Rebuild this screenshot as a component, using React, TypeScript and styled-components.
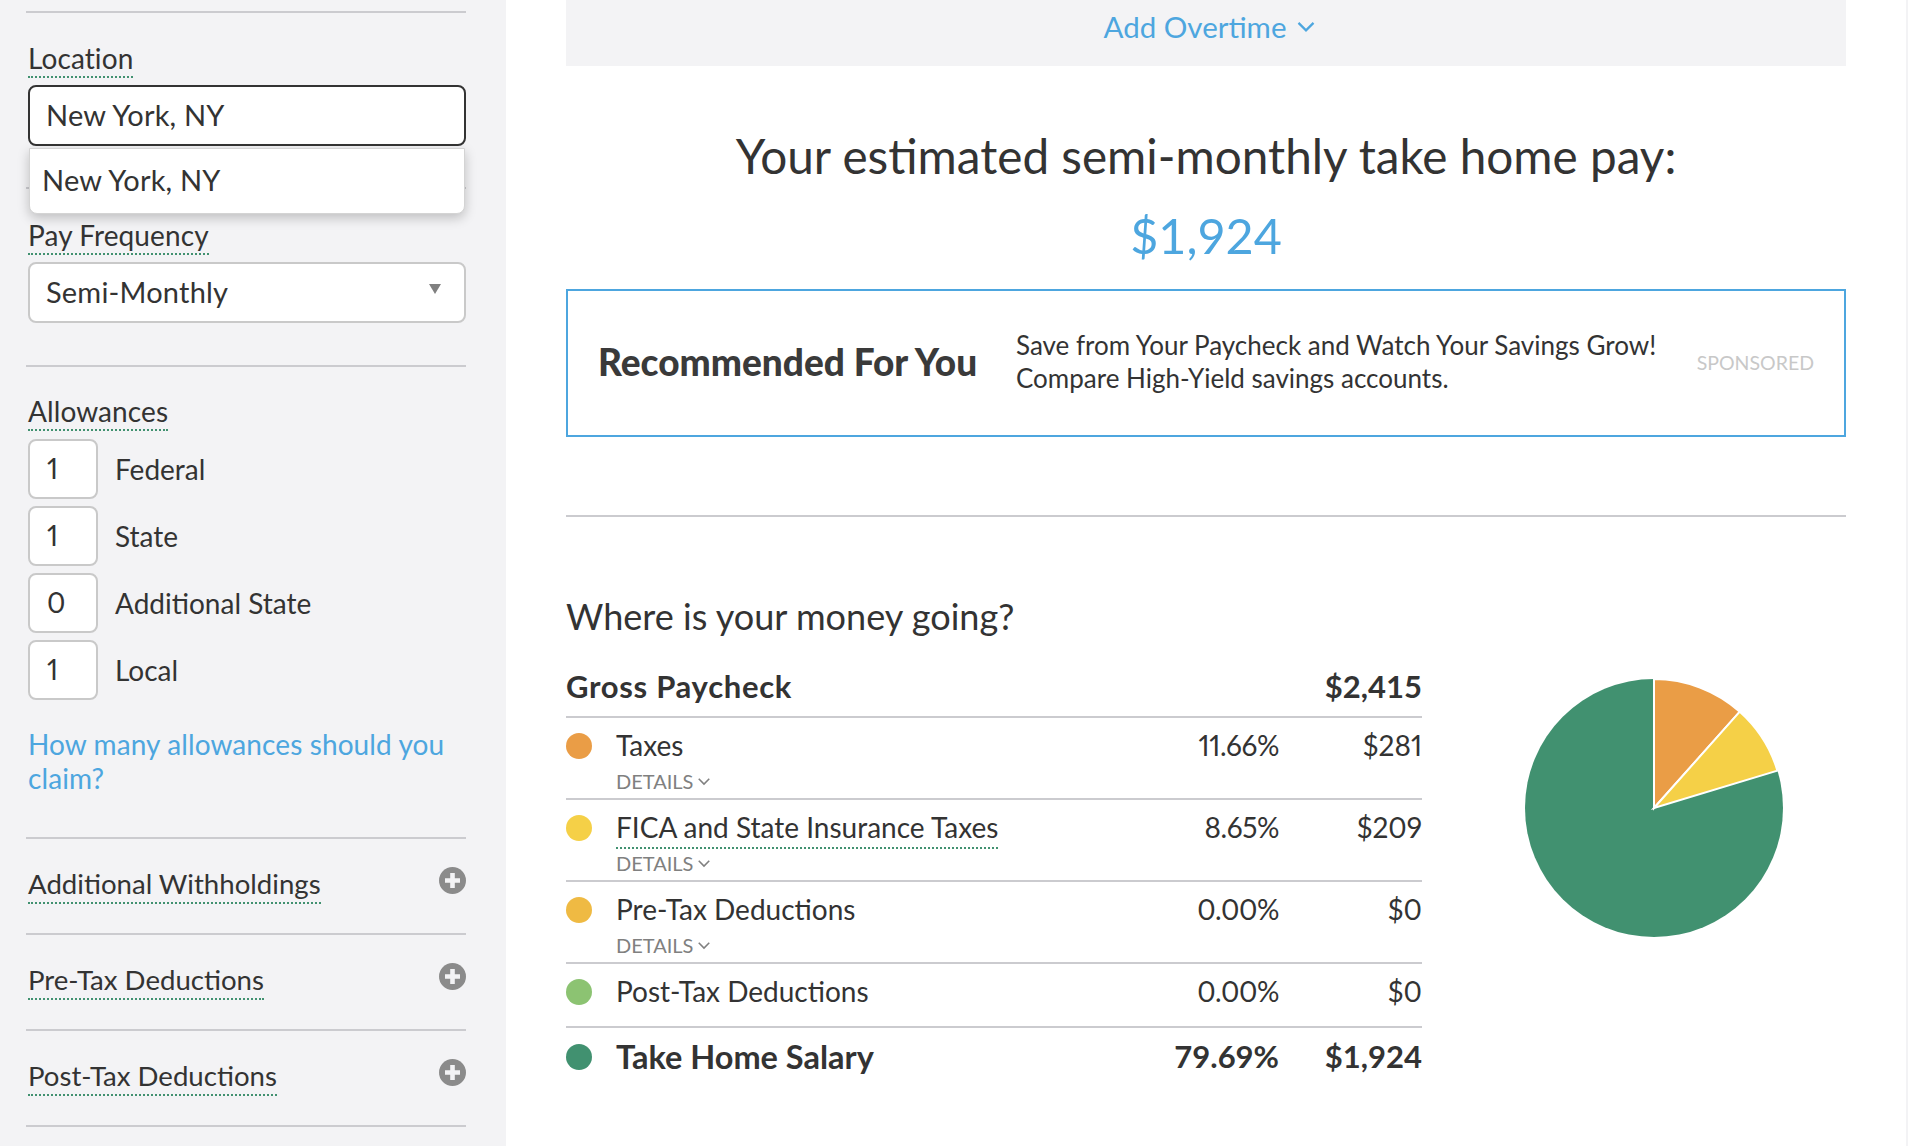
import React from 'react';
import styled, { createGlobalStyle } from 'styled-components';

const GlobalStyle = createGlobalStyle`
  html, body {
    margin: 0;
    padding: 0;
    background: #fff;
  }

  body {
    font-family: 'Lato', 'Open Sans', sans-serif;
    color: #333;
    overflow: hidden;
  }
`;

const allowances = [
  { value: '1', label: 'Federal' },
  { value: '1', label: 'State' },
  { value: '0', label: 'Additional State' },
  { value: '1', label: 'Local' },
];

const sections = ['Additional Withholdings', 'Pre-Tax Deductions', 'Post-Tax Deductions'];

const rows = [
  { color: '#EA9D46', label: 'Taxes', pct: '11.66%', amount: '$281', details: true, tip: false },
  { color: '#F5D047', label: 'FICA and State Insurance Taxes', pct: '8.65%', amount: '$209', details: true, tip: true },
  { color: '#EFBA43', label: 'Pre-Tax Deductions', pct: '0.00%', amount: '$0', details: true, tip: false },
  { color: '#8CC372', label: 'Post-Tax Deductions', pct: '0.00%', amount: '$0', details: false, tip: false },
];

function Chevron({ size }: { size: number }) {
  return (
    <svg width={size} height={size} viewBox="0 0 16 16" fill="none">
      <path d="M2 5.5 8 11.5l6-6" stroke="currentColor" strokeWidth="1.8" />
    </svg>
  );
}

function PlusCircle() {
  return (
    <svg width="27" height="27" viewBox="0 0 27 27">
      <circle cx="13.5" cy="13.5" r="13.5" fill="#8b8b8b" />
      <path d="M13.5 6v15M6 13.5h15" stroke="#f3f3f5" strokeWidth="4.6" />
    </svg>
  );
}

function PieChart() {
  return (
    <svg width="262" height="262" viewBox="-131 -131 262 262">
      <circle r="129" fill="#419170" />
      <path d="M0 0V-129A129 129 0 0 1 85.8 -96.3Z" fill="#EA9D46" stroke="#fff" strokeWidth="2" />
      <path d="M0 0L85.8 -96.3A129 129 0 0 1 123.4 -37.4Z" fill="#F5D047" stroke="#fff" strokeWidth="2" />
    </svg>
  );
}

export default function App() {
  return (
    <>
      <GlobalStyle />
      <Page>
        <Sidebar>
          <LocationGroup>
            <Label>Location</Label>
            <Field $focused>New York, NY</Field>
            <Suggestions>New York, NY</Suggestions>
          </LocationGroup>
          <FrequencyGroup>
            <Label>Pay Frequency</Label>
            <Field>
              Semi-Monthly
              <SelectArrow />
            </Field>
          </FrequencyGroup>
          <AllowanceGroup>
            <Label>Allowances</Label>
            <AllowanceList>
              {allowances.map((item) => (
                <AllowanceRow key={item.label}>
                  <AllowanceInput>{item.value}</AllowanceInput>
                  <AllowanceLabel>{item.label}</AllowanceLabel>
                </AllowanceRow>
              ))}
            </AllowanceList>
            <HelpLink>How many allowances should you claim?</HelpLink>
          </AllowanceGroup>
          {sections.map((name) => (
            <Section key={name}>
              <Label>{name}</Label>
              <PlusCircle />
            </Section>
          ))}
        </Sidebar>
        <Main>
          <OvertimeBar>
            Add Overtime
            <Chevron size={20} />
          </OvertimeBar>
          <Headline>Your estimated semi-monthly take home pay:</Headline>
          <TakeHome>$1,924</TakeHome>
          <Recommendation>
            <RecommendTitle>Recommended For You</RecommendTitle>
            <RecommendText>
              Save from Your Paycheck and Watch Your Savings Grow!
              <br />
              Compare High-Yield savings accounts.
            </RecommendText>
            <Sponsored>SPONSORED</Sponsored>
          </Recommendation>
          <Divider />
          <BreakdownTitle>Where is your money going?</BreakdownTitle>
          <Breakdown>
            <BreakdownTable>
              <GrossRow>
                <GrossLabel>Gross Paycheck</GrossLabel>
                <span>$2,415</span>
              </GrossRow>
              {rows.map((row) => (
                <Row key={row.label} $tall={row.details}>
                  <Dot $color={row.color} />
                  <span>{row.tip ? <Tip>{row.label}</Tip> : row.label}</span>
                  <RowPct>{row.pct}</RowPct>
                  <Amount>{row.amount}</Amount>
                  {row.details && (
                    <Details>
                      DETAILS
                      <Chevron size={14} />
                    </Details>
                  )}
                </Row>
              ))}
              <TotalRow>
                <Dot $color="#419170" />
                <TotalLabel>Take Home Salary</TotalLabel>
                <Pct>79.69%</Pct>
                <Amount>$1,924</Amount>
              </TotalRow>
            </BreakdownTable>
            <PieWrap>
              <PieChart />
            </PieWrap>
          </Breakdown>
        </Main>
      </Page>
    </>
  );
}

const Page = styled.div`
  display: flex;
  width: 1908px;
  height: 1146px;
  overflow: hidden;
  border-right: 2px solid #f3f3f5;
  box-sizing: border-box;
`;

const Sidebar = styled.aside`
  width: 506px;
  flex-shrink: 0;
  box-sizing: border-box;
  padding: 11px 40px 0 26px;
  background: #f3f3f5;
  font-size: 28px;
  letter-spacing: 0.1px;
`;

const Label = styled.span`
  display: inline-block;
  line-height: 34px;
  padding-bottom: 1px;
  border-bottom: 2px dotted #419170;
  color: #333;
`;

const LocationGroup = styled.div`
  position: relative;
  height: 176px;
  padding: 28px 0 0 2px;
  box-sizing: border-box;
  border-top: 2px solid #cbcbcf;
`;

const Field = styled.div<{ $focused?: boolean }>`
  position: relative;
  display: flex;
  align-items: center;
  height: 61px;
  margin-top: 7px;
  padding: 0 16px 2px;
  box-sizing: border-box;
  background: #fff;
  font-size: 29px;
  letter-spacing: 0.2px;
  border: 2px solid ${(p) => (p.$focused ? '#333' : '#c9c9c9')};
  border-radius: 8px;
`;

const Suggestions = styled.div`
  position: absolute;
  top: 135px;
  left: 3px;
  right: 1px;
  height: 66px;
  padding: 0 0 4px 12px;
  display: flex;
  align-items: center;
  box-sizing: border-box;
  background: #fff;
  font-size: 29px;
  letter-spacing: 0.2px;
  border: 1px solid #d4d4d4;
  border-radius: 0 0 8px 8px;
  box-shadow: 0 4px 12px rgba(0, 0, 0, 0.22);
  z-index: 2;
`;

const FrequencyGroup = styled.div`
  height: 178px;
  padding: 29px 0 0 2px;
  box-sizing: border-box;
  border-top: 2px solid #cbcbcf;
`;

const SelectArrow = styled.span`
  position: absolute;
  right: 23px;
  top: 20px;
  border-left: 6px solid transparent;
  border-right: 6px solid transparent;
  border-top: 10px solid #808080;
`;

const AllowanceGroup = styled.div`
  height: 472px;
  padding: 27px 0 0 2px;
  box-sizing: border-box;
  border-top: 2px solid #cbcbcf;
`;

const AllowanceList = styled.div`
  display: flex;
  flex-direction: column;
  gap: 7px;
  margin-top: 8px;
`;

const AllowanceRow = styled.div`
  display: flex;
  align-items: center;
  gap: 17px;
`;

const AllowanceInput = styled.div`
  display: flex;
  align-items: center;
  width: 70px;
  height: 60px;
  padding: 0 0 2px 17px;
  box-sizing: border-box;
  background: #fff;
  font-feature-settings: 'pnum';
  border: 2px solid #c9c9c9;
  border-radius: 8px;
`;

const AllowanceLabel = styled.span`
  padding-bottom: 1px;
  letter-spacing: 0;
`;

const HelpLink = styled.a`
  display: block;
  margin-top: 27px;
  line-height: 34px;
  color: #4da6df;
`;

const Section = styled.div`
  display: flex;
  align-items: flex-start;
  justify-content: space-between;
  height: 96px;
  padding: 28px 0 0 2px;
  box-sizing: border-box;
  font-size: 27.6px;
  letter-spacing: 0;
  border-top: 2px solid #cbcbcf;

  &:last-child {
    height: 98px;
    border-bottom: 2px solid #cbcbcf;
  }
`;

const Main = styled.main`
  flex: 1;
  padding: 0 60px;
`;

const OvertimeBar = styled.div`
  display: flex;
  align-items: center;
  justify-content: center;
  gap: 10px;
  height: 66px;
  padding: 0 0 14px 8px;
  box-sizing: border-box;
  background: #f3f3f5;
  color: #4da6df;
  font-size: 29.5px;
`;

const Headline = styled.h1`
  margin: 60px 0 0;
  font-size: 47.7px;
  font-weight: 400;
  line-height: 60px;
  text-align: center;
  color: #333;
`;

const TakeHome = styled.div`
  margin-top: 19px;
  font-size: 48.5px;
  line-height: 60px;
  text-align: center;
  color: #4da6df;
`;

const Recommendation = styled.section`
  display: flex;
  align-items: center;
  height: 148px;
  margin-top: 24px;
  padding: 0 30px;
  box-sizing: border-box;
  border: 2px solid #4da6df;
`;

const RecommendTitle = styled.h2`
  width: 418px;
  flex-shrink: 0;
  margin: 0 0 3px;
  font-size: 37px;
  font-weight: 900;
  color: #3a3a3a;
`;

const RecommendText = styled.p`
  flex: 1;
  margin: 0 0 2px;
  font-size: 26px;
  line-height: 33px;
`;

const Sponsored = styled.span`
  margin-bottom: 2px;
  font-size: 19.5px;
  color: #c8c8c8;
`;

const Divider = styled.hr`
  margin: 78px 0 0;
  border: 0;
  border-top: 2px solid #cbcbcf;
`;

const BreakdownTitle = styled.h2`
  margin: 77px 0 0;
  font-size: 36.1px;
  font-weight: 400;
  line-height: 44px;
  color: #333;
`;

const Breakdown = styled.div`
  display: flex;
  align-items: flex-start;
`;

const BreakdownTable = styled.div`
  width: 856px;
  font-size: 28px;
`;

const GrossRow = styled.div`
  display: flex;
  align-items: center;
  justify-content: space-between;
  height: 78px;
  padding-top: 17px;
  box-sizing: border-box;
  font-size: 31px;
  font-weight: 700;
`;

const GrossLabel = styled.span`
  letter-spacing: 0.7px;
`;

const Row = styled.div<{ $tall: boolean }>`
  display: grid;
  grid-template-columns: 50px 1fr 150px 143px;
  grid-template-rows: 54px 18px;
  align-items: center;
  height: ${(p) => (p.$tall ? 82 : 64)}px;
  box-sizing: border-box;
  font-feature-settings: 'pnum';
  border-top: 2px solid #cbcbcf;
`;

const Dot = styled.span<{ $color: string }>`
  width: 26px;
  height: 26px;
  margin-top: 1px;
  border-radius: 50%;
  background: ${(p) => p.$color};
`;

const TotalLabel = styled.span`
  font-size: 32.5px;
`;

const Tip = styled.span`
  padding-bottom: 3px;
  border-bottom: 2px dotted #419170;
`;

const Pct = styled.span`
  text-align: right;
`;

const RowPct = styled(Pct)`
  letter-spacing: -0.4px;
`;

const Amount = styled.span`
  text-align: right;
`;

const Details = styled.span`
  grid-column: 2 / -1;
  display: flex;
  align-items: center;
  gap: 4px;
  font-size: 20px;
  color: #808080;
`;

const TotalRow = styled.div`
  display: grid;
  grid-template-columns: 50px 1fr 150px 143px;
  align-items: center;
  height: 56px;
  font-size: 31px;
  font-weight: 700;
  border-top: 2px solid #cbcbcf;
`;

const PieWrap = styled.div`
  margin: 39px 0 0 101px;
`;
